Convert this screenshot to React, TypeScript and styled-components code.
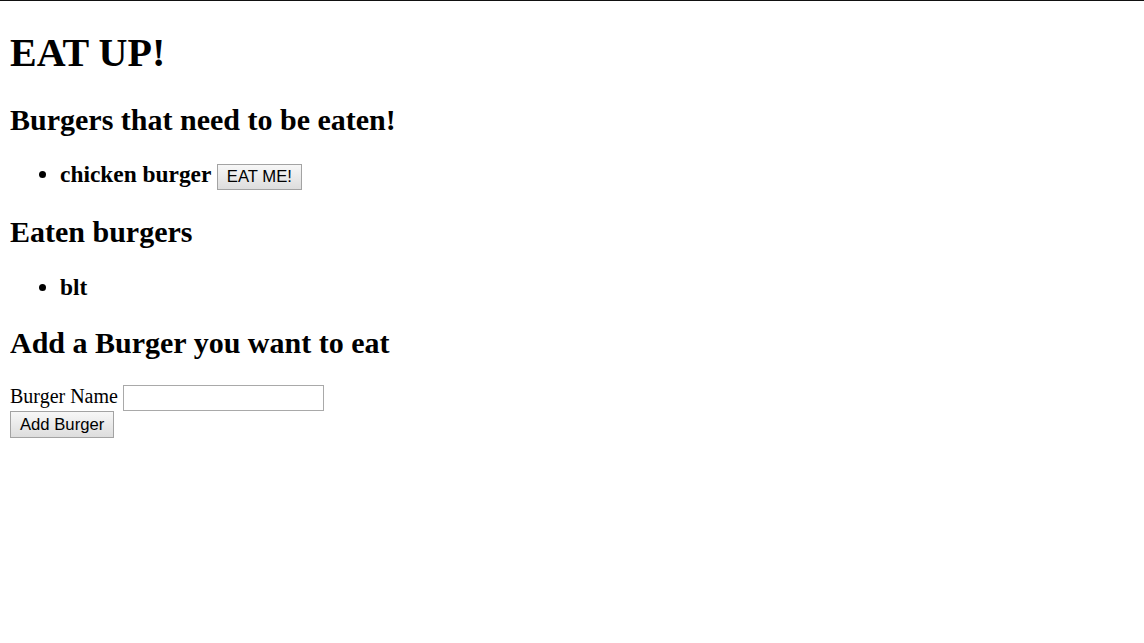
import React from "react";
import styled, { createGlobalStyle } from "styled-components";

const Global = createGlobalStyle`
  html {
    background: linear-gradient(#111 0 1px, #fff 1px) no-repeat;
    background-color: #fff;
  }
  body {
    margin: 10px;
    font-family: "Liberation Serif", "Times New Roman", serif;
    font-size: 20px;
    color: #000;
  }
`;

const Page = styled.div``;

const Title = styled.h1`
  font-size: 40px;
  font-weight: bold;
  margin: 18.8px 0 26.8px;
`;

const Heading = styled.h2`
  font-size: 30px;
  font-weight: bold;
  margin: 24.9px 0;
`;

const List = styled.ul`
  margin: 21px 0 22px;
  padding-left: 50px;
  list-style: disc;
`;

const Item = styled.li`
  font-size: 23.4px;
  font-weight: bold;
  margin: 0;
`;

const Name = styled.span`
  font-weight: bold;
`;

const Button = styled.button<{ $inline?: boolean }>`
  font-family: "Liberation Sans", Arial, sans-serif;
  font-size: 16.67px;
  font-weight: normal;
  color: #000;
  padding: 1px 9px;
  border: 1px solid #a3a3a3;
  border-radius: 0;
  background: linear-gradient(#f7f7f7, #dddddd);
  vertical-align: middle;
  line-height: ${(p) => (p.$inline ? "22px" : "23px")};
  margin: 0;
`;

const Form = styled.form`
  font-size: 20px;
  margin-top: 2px;
`;

const Label = styled.label``;

const Input = styled.input`
  width: 201px;
  height: 26px;
  box-sizing: border-box;
  border: 1px solid #a9a9a9;
  padding: 1px 2px;
  margin: 0;
  font-size: 16.67px;
  vertical-align: baseline;
  border-radius: 0;
`;

export default function App() {
  return (
    <Page>
      <Global />
      <Title>EAT UP!</Title>
      <Heading>Burgers that need to be eaten!</Heading>
      <List>
        <Item>
          <Name>chicken burger</Name> <Button $inline>EAT ME!</Button>
        </Item>
      </List>
      <Heading>Eaten burgers</Heading>
      <List>
        <Item>
          <Name>blt</Name>
        </Item>
      </List>
      <Heading>Add a Burger you want to eat</Heading>
      <Form onSubmit={(e) => e.preventDefault()}>
        <Label htmlFor="burger">Burger Name</Label> <Input id="burger" type="text" />
        <br />
        <Button type="submit">Add Burger</Button>
      </Form>
    </Page>
  );
}
